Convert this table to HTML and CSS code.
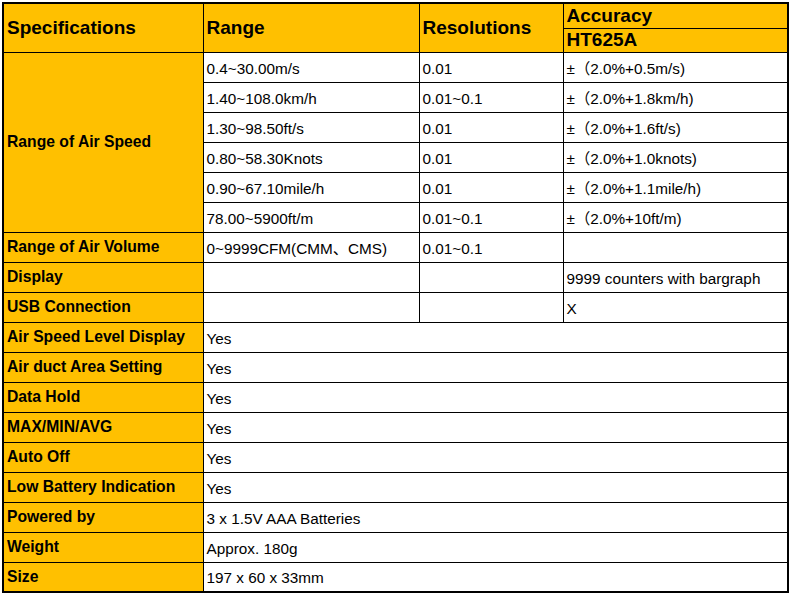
FILE: index.html
```html
<!DOCTYPE html>
<html>
<head>
<meta charset="utf-8">
<link rel="stylesheet" href="styles.css">
</head>
<body>
<table class="spec">
  <colgroup>
    <col class="c1"><col class="c2"><col class="c3"><col class="c4">
  </colgroup>
  <tr class="hrow1">
    <th class="hd" rowspan="2">Specifications</th>
    <th class="hd" rowspan="2">Range</th>
    <th class="hd" rowspan="2">Resolutions</th>
    <th class="hd sub">Accuracy</th>
  </tr>
  <tr class="hrow2">
    <th class="hd sub">HT625A</th>
  </tr>
  <tr><th class="lbl" rowspan="6">Range of Air Speed</th><td>0.4~30.00m/s</td><td>0.01</td><td>±（2.0%+0.5m/s)</td></tr>
  <tr><td>1.40~108.0km/h</td><td>0.01~0.1</td><td>±（2.0%+1.8km/h)</td></tr>
  <tr><td>1.30~98.50ft/s</td><td>0.01</td><td>±（2.0%+1.6ft/s)</td></tr>
  <tr><td>0.80~58.30Knots</td><td>0.01</td><td>±（2.0%+1.0knots)</td></tr>
  <tr><td>0.90~67.10mile/h</td><td>0.01</td><td>±（2.0%+1.1mile/h)</td></tr>
  <tr><td>78.00~5900ft/m</td><td>0.01~0.1</td><td>±（2.0%+10ft/m)</td></tr>
  <tr><th class="lbl">Range of Air Volume</th><td>0~9999CFM(CMM、CMS)</td><td>0.01~0.1</td><td></td></tr>
  <tr><th class="lbl">Display</th><td></td><td></td><td>9999 counters with bargraph</td></tr>
  <tr><th class="lbl">USB Connection</th><td></td><td></td><td>X</td></tr>
  <tr><th class="lbl">Air Speed Level Display</th><td colspan="3">Yes</td></tr>
  <tr><th class="lbl">Air duct Area Setting</th><td colspan="3">Yes</td></tr>
  <tr><th class="lbl">Data Hold</th><td colspan="3">Yes</td></tr>
  <tr><th class="lbl">MAX/MIN/AVG</th><td colspan="3">Yes</td></tr>
  <tr><th class="lbl">Auto Off</th><td colspan="3">Yes</td></tr>
  <tr><th class="lbl">Low Battery Indication</th><td colspan="3">Yes</td></tr>
  <tr><th class="lbl">Powered by</th><td colspan="3">3 x 1.5V AAA Batteries</td></tr>
  <tr><th class="lbl">Weight</th><td colspan="3">Approx. 180g</td></tr>
  <tr><th class="lbl">Size</th><td colspan="3">197 x 60 x 33mm</td></tr>
</table>
</body>
</html>
```
FILE: styles.css
```css
html, body {
  margin: 0;
  padding: 0;
  background: #fff;
}
body {
  padding: 2px 0 0 2px;
  font-family: "Liberation Sans", Arial, "Noto Sans CJK SC", sans-serif;
  color: #000;
}
.spec {
  border-collapse: collapse;
  table-layout: fixed;
  width: 785px;
  border: 2px solid #000;
}
.c1 { width: 200px; }
.c2 { width: 216px; }
.c3 { width: 144px; }
.c4 { width: 225px; }
.spec th, .spec td {
  border: 1px solid #000;
  padding: 0 0 0 3px;
  text-align: left;
  white-space: nowrap;
  overflow: hidden;
  line-height: 1.15;
}
.spec tr { height: 30px; }
.spec td {
  font-size: 15.3px;
  font-weight: normal;
  padding-top: 3px;
}
.spec .hd {
  background: #ffc000;
  font-size: 19px;
  font-weight: bold;
  padding-top: 1px;
}
.spec .hrow1 { height: 25px; }
.spec .hrow2 { height: 24px; }
.spec .sub { padding-top: 0; }
.spec .lbl {
  background: #ffc000;
  font-size: 15.7px;
  font-weight: bold;
}
```
